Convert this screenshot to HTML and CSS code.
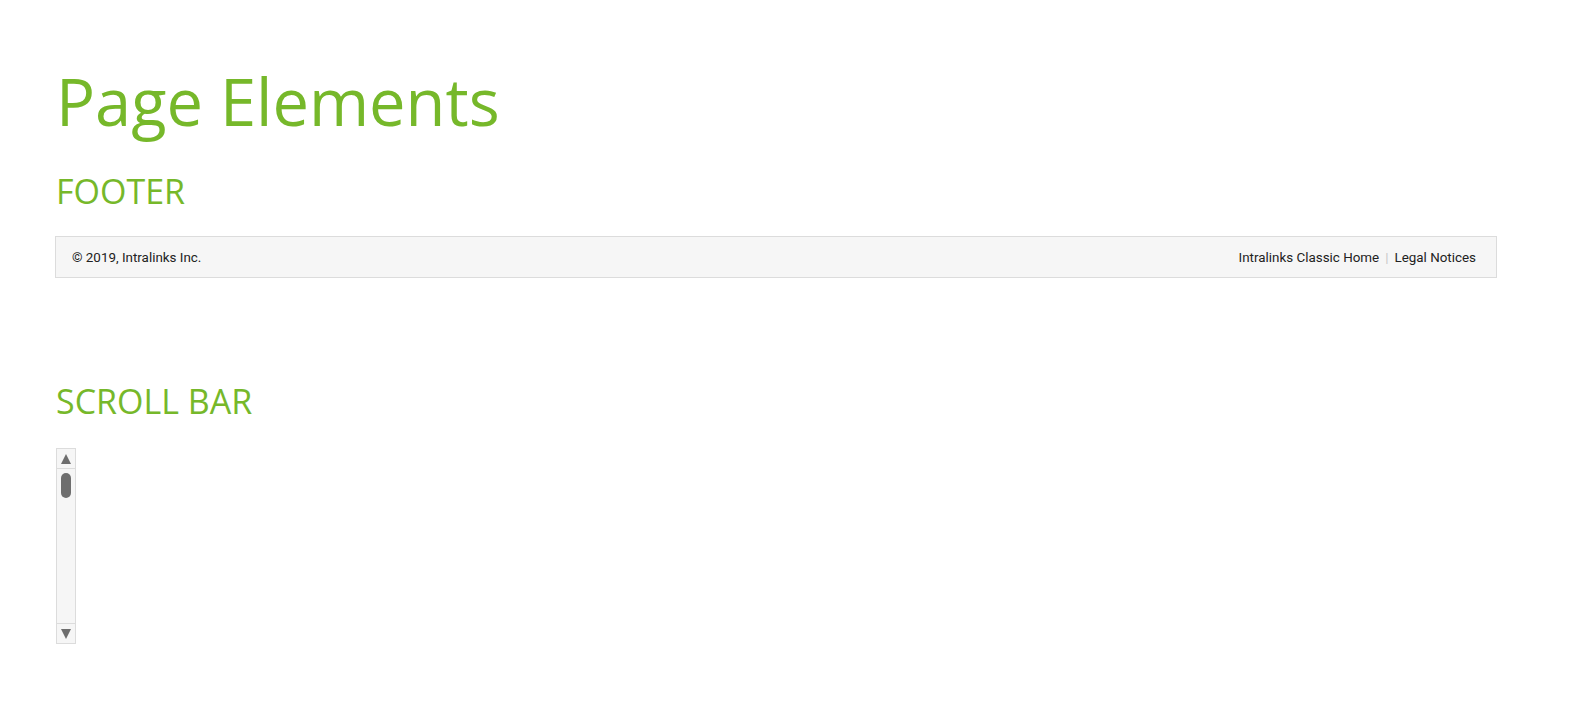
FILE: index.html
```html
<!DOCTYPE html>
<html lang="en">
<head>
    <meta charset="UTF-8">
    <title>Page Elements</title>
    <link rel="stylesheet" href="styles.css">
</head>
<body>
    <div class="page">
        <h1 class="page-title">Page Elements</h1>

        <h2 class="section-title">FOOTER</h2>
        <div class="footer">
            <span class="copyright">&copy; 2019, Intralinks Inc.</span>
            <div class="footer-links">
                <a href="#">Intralinks Classic Home</a>
                <span class="sep">|</span>
                <a href="#">Legal Notices</a>
            </div>
        </div>

        <h2 class="section-title scroll-title">SCROLL BAR</h2>
        <div class="scrollbar">
            <div class="scroll-btn up">
                <svg width="10" height="10" viewBox="0 0 10 10"><polygon points="5,0 10,10 0,10" fill="#6e6e6e"/></svg>
            </div>
            <div class="scroll-track">
                <div class="scroll-thumb"></div>
            </div>
            <div class="scroll-btn down">
                <svg width="10" height="10" viewBox="0 0 10 10"><polygon points="0,0 10,0 5,10" fill="#6e6e6e"/></svg>
            </div>
        </div>
    </div>
</body>
</html>
```

FILE: styles.css
```css
body {
    margin: 0;
    background-color: #fff;
    font-family: "Open Sans", "Noto Sans", sans-serif;
}
.page {
    padding: 63px 99px 0 56px;
}
.page-title {
    margin: 0;
    font-size: 65px;
    line-height: 77px;
    font-weight: 400;
    color: #76b82a;
}
.section-title {
    margin: 31px 0 0 0;
    font-size: 34px;
    line-height: 40px;
    font-weight: 400;
    color: #76b82a;
}
.scroll-title {
    margin-top: 103px;
}
.footer {
    margin: 25px 0 0 -1px;
    display: flex;
    justify-content: space-between;
    align-items: center;
    height: 40px;
    padding: 1px 20px 0 16px;
    box-sizing: border-box;
    height: 42px;
    background-color: #f6f6f6;
    border: 1px solid #dcdcdc;
    font-family: Roboto, "Liberation Sans", sans-serif;
    font-size: 13.4px;
    color: #222;
}
.footer-links {
    display: flex;
    align-items: center;
    gap: 6px;
}
.footer-links a {
    color: #222;
    text-decoration: none;
}
.footer-links .sep {
    color: #c8c8c8;
}
.scrollbar {
    margin-top: 27px;
    width: 18px;
    height: 194px;
    display: flex;
    flex-direction: column;
    border: 1px solid #dcdcdc;
    background-color: #f6f6f6;
}
.scroll-btn {
    height: 19px;
    display: flex;
    align-items: center;
    justify-content: center;
}
.scroll-btn.up {
    border-bottom: 1px solid #dcdcdc;
}
.scroll-btn.down {
    border-top: 1px solid #dcdcdc;
}
.scroll-track {
    flex: 1;
    padding: 4px 0 0 4px;
}
.scroll-thumb {
    width: 10px;
    height: 25px;
    border-radius: 5px;
    background-color: #6e6e6e;
}
```
